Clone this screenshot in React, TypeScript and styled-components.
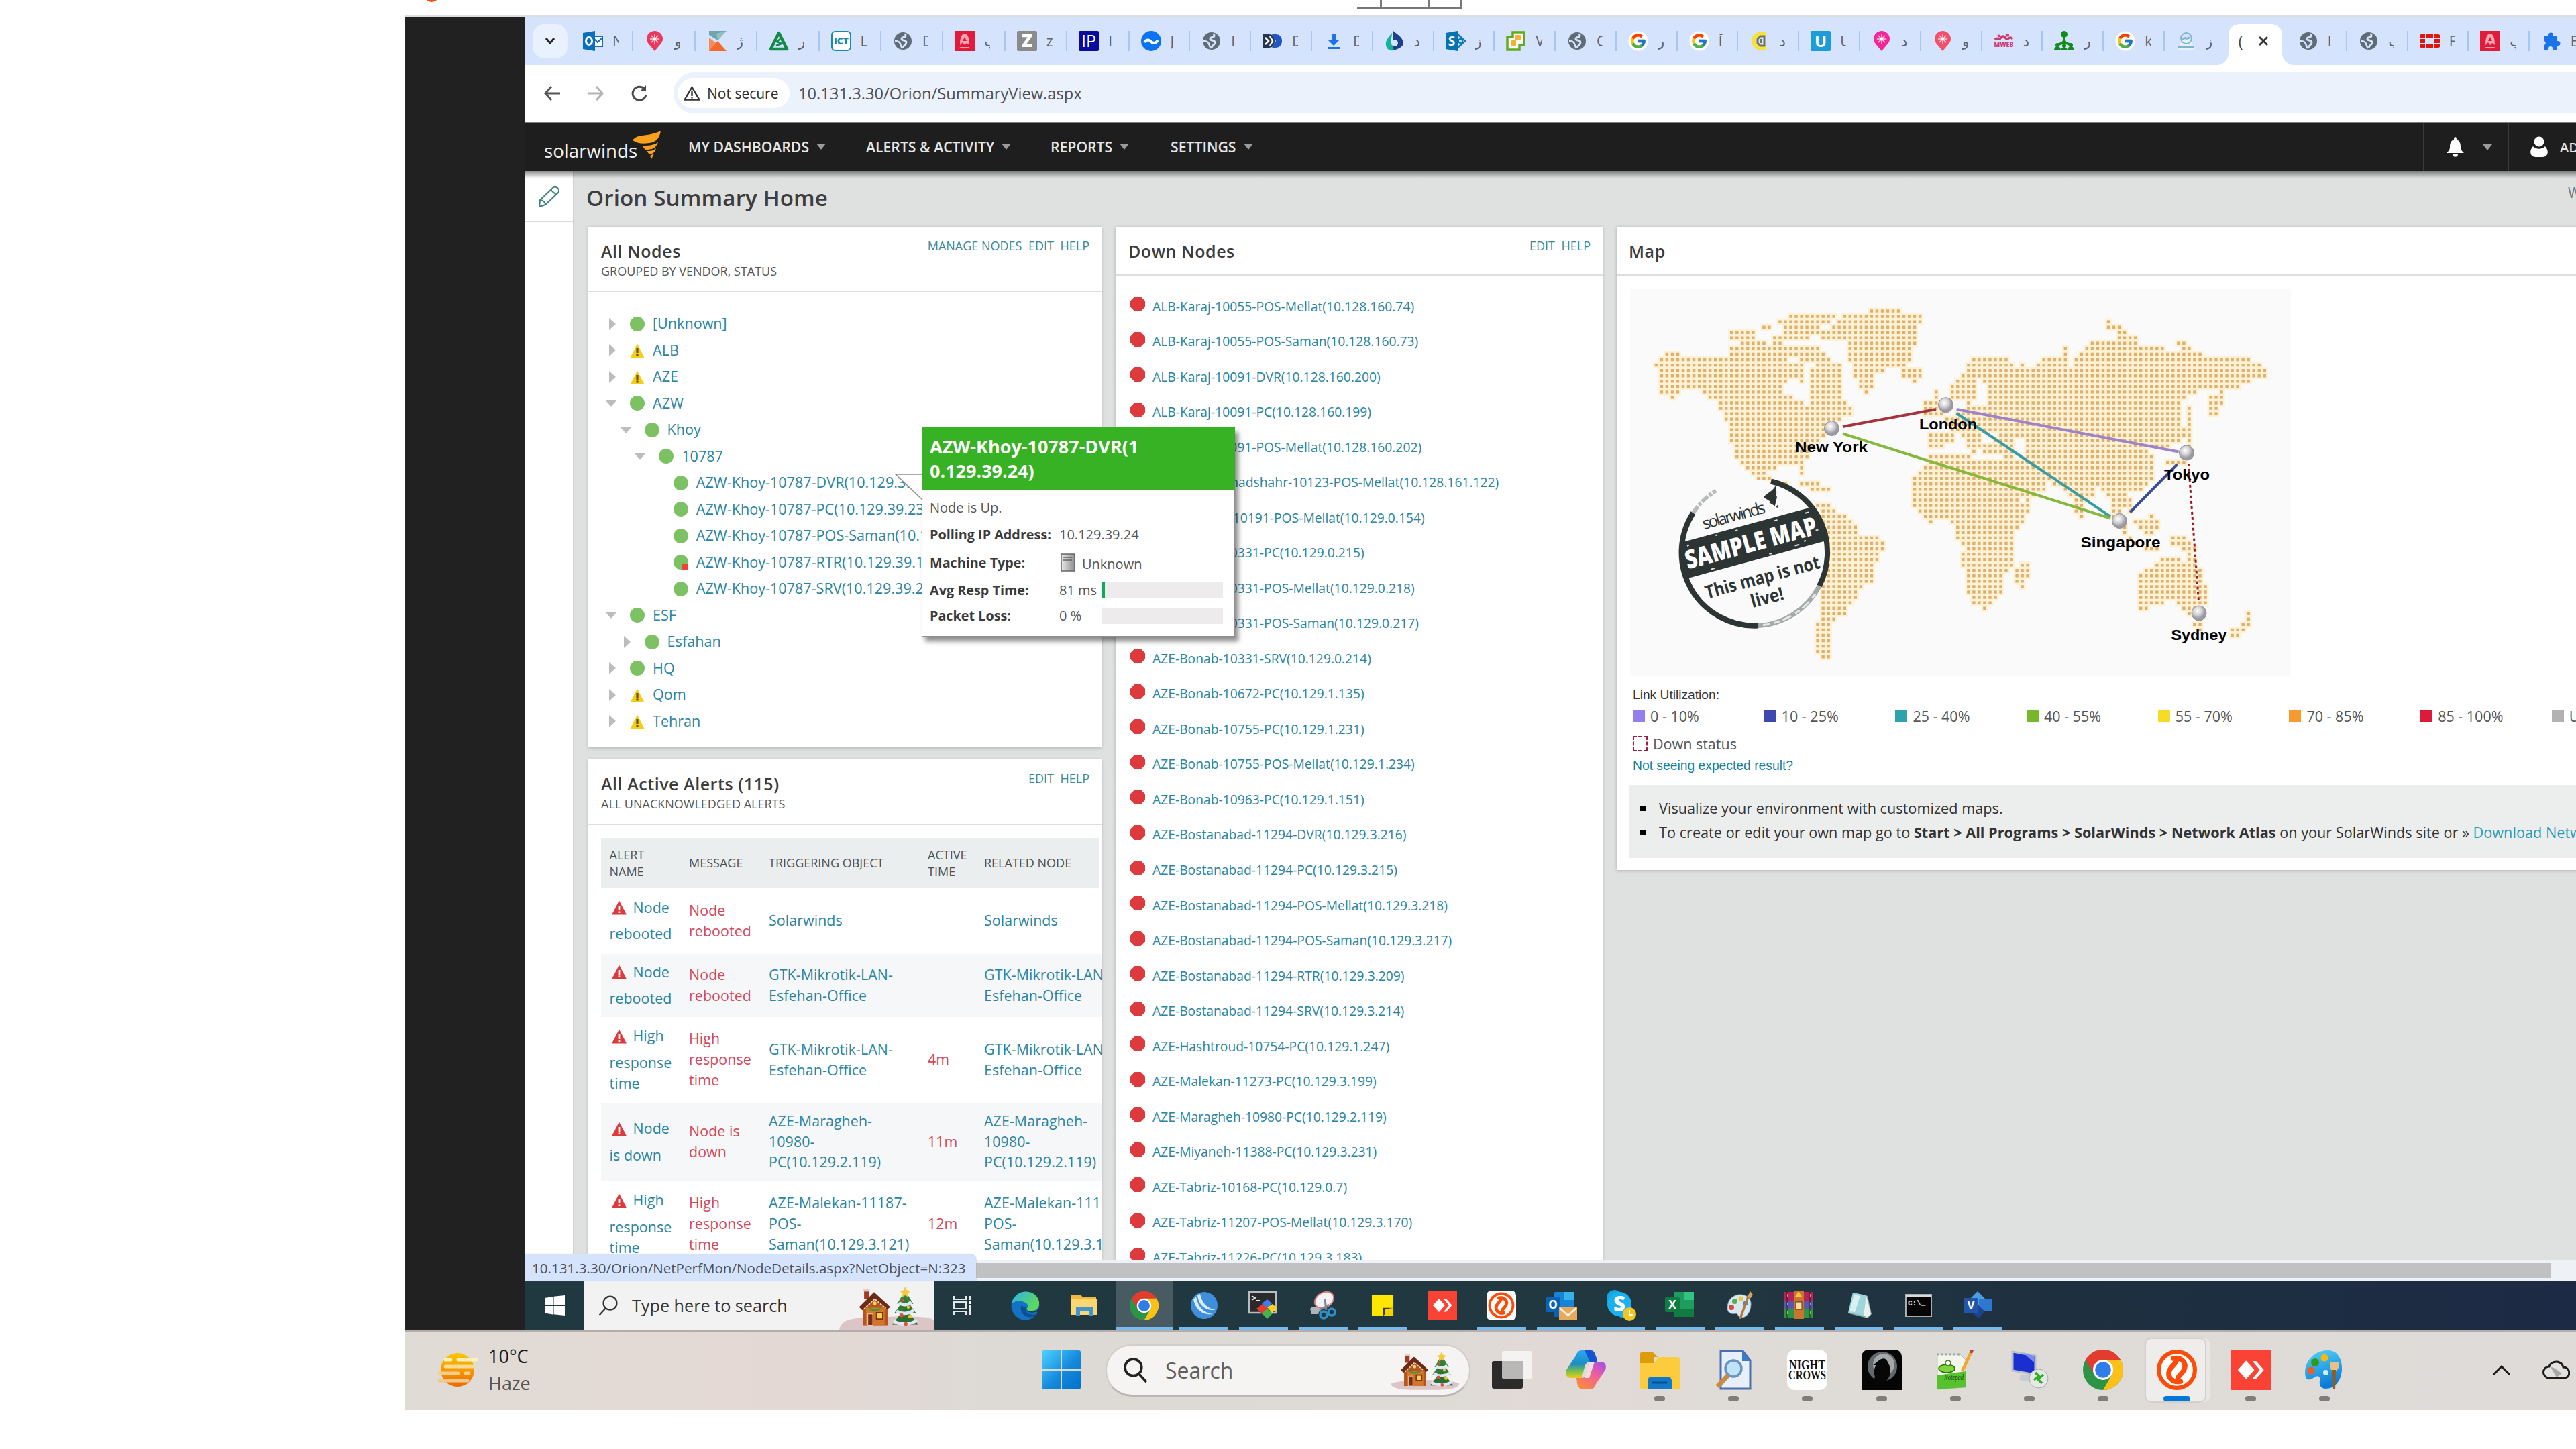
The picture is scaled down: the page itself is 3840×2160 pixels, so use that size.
import React from 'react';
import styled, { createGlobalStyle, css } from 'styled-components';
import { FcGoogle } from 'react-icons/fc';

const Global = createGlobalStyle`
  * { box-sizing: border-box; }
  html, body { margin: 0; padding: 0; background: #fff; }
  body { font-family: "Open Sans", "Noto Sans", "DejaVu Sans", sans-serif; color: #444; }
  svg { display: block; flex: none; }
`;

/* ---------- window frame ---------- */
const Screen = styled.div`
  width: 3840px;
  height: 2160px;
  overflow: hidden;
  background: #fff;
  display: flex;
  flex-direction: column;
`;
const TopStrip = styled.div`
  height: 22px;
  flex: none;
  position: relative;
`;
const OrangeDot = styled.div`
  position: absolute;
  left: 632px;
  top: -20px;
  width: 23px;
  height: 23px;
  border-radius: 50%;
  background: #ff4a12;
`;
const GripBox = styled.div`
  position: absolute;
  left: 2023px;
  top: 0;
  width: 157px;
  height: 14px;
  border-bottom: 3px solid #777;
  border-right: 3px solid #777;
  display: flex;
`;
const GripCell = styled.div<{ $w: number }>`
  width: ${(p) => p.$w}px;
  border-right: 3px solid #777;
`;
const Remote = styled.div`
  margin-left: 603px;
  width: 3237px;
  border-top: 3px solid #dcdde1;
  height: 1963px;
  flex: none;
  display: flex;
  padding-bottom: 3px;
  background: #b3aeab;
  overflow: hidden;
`;
const Gutter = styled.div`
  width: 180px;
  flex: none;
  background: #212121;
`;
const Desktop = styled.div`
  flex: 1;
  min-width: 0;
  display: flex;
  flex-direction: column;
  overflow: hidden;
  position: relative;
`;

/* ---------- browser chrome ---------- */
const TabStrip = styled.div`
  height: 72px;
  flex: none;
  background: #d5e4fc;
  display: flex;
  align-items: center;
  padding-left: 11px;
  white-space: nowrap;
`;
const TabMenu = styled.div`
  width: 52px;
  height: 51px;
  border-radius: 18px;
  background: #e9f1fe;
  margin-right: 4px;
  flex: none;
  display: grid;
  place-items: center;
`;
const Tab = styled.div<{ $w: number; $sep: boolean }>`
  width: ${(p) => p.$w}px;
  height: 30px;
  flex: none;
  border-left: 2px solid ${(p) => (p.$sep ? '#a9c5f4' : 'transparent')};
  padding-left: 17px;
  display: flex;
  align-items: center;
`;
const TabLetter = styled.span`
  margin-left: 14px;
  width: 9px;
  overflow: hidden;
  font-size: 21px;
  line-height: 34px;
  color: #5b636d;
`;
const ActiveTab = styled.div`
  width: 91px;
  height: 72px;
  flex: none;
  position: relative;
  display: flex;
  align-items: center;
  padding-left: 21px;
  gap: 22px;
`;
const ActiveShape = styled.svg`
  position: absolute;
  left: -9px;
  top: 0;
`;
const ActiveLetter = styled.span`
  position: relative;
  width: 8px;
  overflow: hidden;
  font-size: 23px;
  color: #444;
`;
const CloseMark = styled.svg`
  position: relative;
`;
const Toolbar = styled.div`
  height: 85px;
  flex: none;
  background: #fff;
  display: flex;
  align-items: center;
  padding: 0 0 2px 28px;
`;
const ToolIcon = styled.div<{ $gap: number }>`
  margin-right: ${(p) => p.$gap}px;
`;
const Omnibox = styled.div`
  height: 61px;
  flex: 1;
  border-radius: 31px 0 0 31px;
  background: #ecf2fb;
  display: flex;
  align-items: center;
  padding-left: 6px;
`;
const SecurityChip = styled.div`
  width: 167px;
  height: 44px;
  border-radius: 22px;
  background: #fff;
  display: flex;
  align-items: center;
  padding-left: 9px;
  gap: 10px;
  font-size: 21px;
  color: #2b2b2b;
`;
const Url = styled.span`
  margin-left: 13px;
  font-size: 23.7px;
  color: #4b4f55;
`;

/* ---------- Orion top navigation ---------- */
const Nav = styled.div`
  height: 73px;
  flex: none;
  background: #1e1e1e;
  border-top: 1px solid #7b7b7b;
  display: flex;
  align-items: center;
  position: relative;
`;
const Logo = styled.div`
  width: 243px;
  height: 100%;
  padding-left: 28px;
  display: flex;
`;
const LogoText = styled.span`
  font-size: 27.7px;
  line-height: 40px;
  margin-top: 21px;
  color: #f0f0f0;
`;
const LogoFlame = styled.svg`
  margin: 12px 0 0 -7px;
`;
const NavItem = styled.div<{ $w: number }>`
  width: ${(p) => p.$w}px;
  display: flex;
  align-items: center;
  gap: 11px;
  font-size: 21.2px;
  font-weight: 600;
  color: #e6e6e6;
  padding-bottom: 2px;
`;
const Caret = styled.i`
  width: 0;
  height: 0;
  border: 7px solid transparent;
  border-top: 9px solid #9b9b9b;
  border-bottom: 0;
`;
const NavRight = styled.div`
  margin-left: auto;
  width: 228px;
  height: 100%;
  display: flex;
`;
const NavCell = styled.div<{ $w: number; $pad: number; $gap: number }>`
  width: ${(p) => p.$w}px;
  border-left: 1px solid #3a3a3a;
  padding-left: ${(p) => p.$pad}px;
  display: flex;
  align-items: center;
  gap: ${(p) => p.$gap}px;
  flex: none;
  font-size: 20px;
  font-weight: 600;
  color: #e6e6e6;
`;

/* ---------- page ---------- */
const Page = styled.div`
  height: 1624px;
  flex: none;
  display: flex;
  background: #dfe1e1;
  overflow: hidden;
  position: relative;
`;
const NavShadow = styled.div`
  position: absolute;
  left: 0;
  right: 0;
  top: 0;
  height: 11px;
  background: linear-gradient(rgba(0, 0, 0, 0.45), rgba(0, 0, 0, 0));
`;
const SideBar = styled.div`
  width: 73px;
  flex: none;
  background: #fff;
  border-right: 2px solid #cfd1d1;
`;
const EditSlot = styled.div`
  height: 76px;
  border-bottom: 2px solid #dadada;
  padding: 21px 0 0 18px;
`;
const Content = styled.div`
  flex: 1;
  min-width: 0;
  padding-left: 21px;
`;
const TitleRow = styled.div`
  height: 83px;
  display: flex;
  justify-content: space-between;
  padding: 14px 0 0;
  margin-left: -3px;
`;
const PageTitle = styled.h1`
  margin: 0;
  font-size: 33.2px;
  letter-spacing: 0.1px;
  font-weight: 600;
  line-height: 52px;
  color: #3d3d3d;
`;
const Clock = styled.span`
  width: 12px;
  overflow: hidden;
  font-size: 21px;
  line-height: 36px;
  color: #6c7a80;
`;
const Columns = styled.div`
  display: flex;
  align-items: flex-start;
  gap: 21px;
`;
const Column = styled.div<{ $w: number }>`
  width: ${(p) => p.$w}px;
  flex: none;
  display: flex;
  flex-direction: column;
  gap: 18px;
`;
const Panel = styled.section<{ $h: number }>`
  height: ${(p) => p.$h}px;
  background: #fff;
  box-shadow: 0 1px 5px rgba(0, 0, 0, 0.22);
  overflow: hidden;
`;
const PanelHead = styled.header<{ $h: number; $pad: number }>`
  height: ${(p) => p.$h}px;
  border-bottom: 2px solid #dcdede;
  padding: 19px 18px 0 ${(p) => p.$pad}px;
  display: flex;
  justify-content: space-between;
`;
const PanelTitle = styled.h2`
  margin: 0;
  font-size: 25px;
  letter-spacing: 0.55px;
  font-weight: 600;
  line-height: 34px;
  color: #3c3c3c;
`;
const PanelSub = styled.div`
  font-size: 18px;
  line-height: 26px;
  color: #555;
`;
const PanelLinks = styled.div`
  display: flex;
  gap: 9.5px;
  margin-top: -4px;
  font-size: 18px;
  line-height: 26px;
  color: #3a8795;
  height: 26px;
`;

/* ---------- node tree ---------- */
const Tree = styled.div`
  padding: 27px 0 0 24px;
`;
const TreeRow = styled.div<{ $depth: number }>`
  height: 39.53px;
  padding-left: ${(p) => p.$depth * 21.6}px;
  display: flex;
  align-items: center;
  font-size: 21.6px;
  color: #2a84a0;
  white-space: nowrap;
`;
const TreeText = styled.span`
  margin-top: -2px;
`;
const Twist = styled.div`
  width: 38px;
  display: flex;
  padding-left: 1px;
`;
const RightTwist = styled.i`
  margin-left: 6px;
  border: 9px solid transparent;
  border-left: 10px solid #bdbdbd;
  border-right: 0;
`;
const DownTwist = styled.i`
  border: 9px solid transparent;
  border-top: 10px solid #bdbdbd;
  border-bottom: 0;
`;
const StatusSlot = styled.div`
  width: 34px;
`;

/* ---------- alerts ---------- */
const AlertTable = styled.div`
  margin: 19px 0 0 19px;
  width: 746px;
`;
const rowGrid = css`
  display: grid;
  grid-template-columns: 118.5px 119px 237px 84px 1fr;
  padding-left: 12.5px;
  align-items: center;
`;
const AlertHead = styled.div`
  ${rowGrid}
  height: 75px;
  margin-right: 3px;
  background: #ebeeee;
  font-size: 18px;
  line-height: 25px;
  color: #4c4f50;
`;
const AlertRow = styled.div<{ $h: number; $odd: boolean }>`
  ${rowGrid}
  height: ${(p) => p.$h}px;
  background: ${(p) => (p.$odd ? '#f6f7f8' : '#fff')};
  font-size: 21.4px;
  letter-spacing: 0.08px;
  line-height: 30.8px;
  color: #2a84a0;
  white-space: pre;
`;
const NameCell = styled.div`
  padding-bottom: 9px;
`;
const NameFirst = styled.div`
  height: 48px;
  display: flex;
  align-items: center;
  gap: 10px;
  padding-left: 3px;
`;
const Cell = styled.div<{ $red?: boolean }>`
  padding-bottom: 1px;
  color: ${(p) => (p.$red ? '#d4485a' : 'inherit')};
`;

/* ---------- down nodes ---------- */
const DownList = styled.div`
  padding: 19px 0 0 22px;
`;
const DownRow = styled.div`
  height: 52.52px;
  display: flex;
  align-items: center;
  gap: 11px;
  font-size: 19.3px;
  color: #2a84a0;
  white-space: nowrap;
`;
const DownMark = styled.div`
  margin-top: -6px;
`;

/* ---------- map ---------- */
const MapBody = styled.div`
  padding: 20px 0 0 20px;
`;
const LegendTitle = styled.div`
  margin: 15px 0 0 4px;
  font: 19.2px/26px "Liberation Sans", Arial, sans-serif;
  color: #333;
`;
const LegendRow = styled.div`
  display: flex;
  margin: 0 0 5px 4px;
  height: 36px;
  align-items: center;
`;
const LegendItem = styled.div`
  width: 195.7px;
  flex: none;
  display: flex;
  align-items: center;
  gap: 8px;
  font-size: 21.5px;
  color: #555;
  white-space: nowrap;
`;
const Swatch = styled.i<{ $c: string }>`
  width: 18px;
  height: 19px;
  background: ${(p) => p.$c};
`;
const DownSwatch = styled.i`
  width: 22px;
  height: 23px;
  border: 2px dashed #a01c40;
`;
const HelpLink = styled.div`
  margin: -2px 0 0 4px;
  font: 19.3px/26px "Liberation Sans", Arial, sans-serif;
  color: #147f9f;
`;
const Hints = styled.ul`
  list-style: none;
  margin: 15px 0 0 -2px;
  padding: 17px 0 0 17px;
  height: 109px;
  background: #eceeee;
  font-size: 21.7px;
  line-height: 36px;
  color: #333;
`;
const Hint = styled.li`
  display: flex;
  align-items: center;
  gap: 19px;
  white-space: nowrap;
  &::before {
    content: '';
    flex: none;
    width: 9px;
    height: 8px;
    background: #000;
  }
`;
const HintLink = styled.span`
  color: #2a9cb8;
`;

/* ---------- node tooltip ---------- */
const Tooltip = styled.div`
  position: absolute;
  left: 591px;
  top: 612px;
  width: 467px;
  height: 312px;
  background: #fff;
  border: 1px solid #8f8f8f;
  box-shadow: 5px 7px 7px rgba(0, 0, 0, 0.45);
`;
const TooltipArrow = styled.svg`
  position: absolute;
  left: -41px;
  top: 68px;
`;
const TooltipHead = styled.div`
  height: 94px;
  background: #38b225;
  color: #fff;
  font-weight: 700;
  font-size: 27px;
  line-height: 36px;
  padding: 11px 0 0 11px;
  margin: -1px -1px 0 0;
`;
const TooltipBody = styled.div`
  padding: 5px 0 0 11px;
  font-size: 20px;
  color: #555;
`;
const TipRow = styled.div<{ $h: number }>`
  height: ${(p) => p.$h}px;
  display: flex;
  align-items: center;
`;
const TipLabel = styled.b`
  width: 193px;
  color: #3a3a3a;
  font-weight: 700;
  font-size: 19.8px;
`;
const TipValue = styled.span<{ $w?: number }>`
  display: flex;
  gap: 10px;
  width: ${(p) => (p.$w ? p.$w + 'px' : 'auto')};
  align-items: center;
  padding-left: ${(p) => (p.$w ? 0 : 2)}px;
`;
const MachineName = styled.span`
  padding-top: 4px;
`;
const Meter = styled.div`
  width: 181px;
  height: 24px;
  background: #edebec;
`;
const MeterFill = styled.div`
  height: 100%;
  background: #0cac57;
`;

/* ---------- scrollbar + status popup ---------- */
const HScroll = styled.div`
  height: 30px;
  flex: none;
  background: #eef1f5;
  padding: 3px 37px 4px 0;
`;
const HThumb = styled.div`
  height: 100%;
  background: #c1c1c3;
`;
const StatusPopup = styled.div`
  position: absolute;
  left: 0;
  top: 1845px;
  width: 672px;
  height: 39px;
  border-top-right-radius: 8px;
  background: #d5e4fc;
  box-shadow: 0 0 2px #9aa8bf;
  padding-left: 10px;
  font-size: 20.6px;
  line-height: 41px;
  color: #4a4f58;
  white-space: nowrap;
`;

/* ---------- inner taskbar ---------- */
const InnerBar = styled.div`
  height: 73px;
  flex: none;
  display: flex;
  background: linear-gradient(90deg, #20383f 0%, #213840 55%, #1e3040 75%, #1d2a45 100%);
  border-top: 1px solid #7d8890;
`;
const StartCell = styled.div`
  width: 88px;
  display: grid;
  place-items: center;
`;
const InnerSearch = styled.div`
  width: 521px;
  background: #f3f2f2;
  display: flex;
  align-items: center;
  padding-left: 21px;
  font-size: 25.2px;
  color: #333;
  gap: 20px;
`;
const InnerArt = styled.div`
  margin-left: auto;
  align-self: flex-end;
`;
const TaskView = styled.div`
  width: 92px;
  padding-right: 6px;
  display: grid;
  place-items: center;
`;
const InnerItem = styled.div<{ $open?: boolean; $active?: boolean }>`
  width: 88.75px;
  position: relative;
  display: grid;
  place-items: center;
  &::before {
    content: '';
    position: absolute;
    inset: 0 2px;
    background: ${(p) => (p.$active ? 'rgba(255,255,255,0.18)' : 'none')};
  }
  &::after {
    content: '';
    position: absolute;
    bottom: 0;
    left: ${(p) => (p.$active ? 2 : 8)}px;
    right: ${(p) => (p.$active ? 2 : 8)}px;
    height: 4px;
    background: ${(p) => (p.$open ? '#76b9ed' : 'none')};
  }
  svg { position: relative; }
`;

/* ---------- outer taskbar ---------- */
const OuterBar = styled.div`
  margin-left: 603px;
  height: 117px;
  flex: none;
  display: flex;
  align-items: center;
  padding: 0 0 3px 49px;
  background: linear-gradient(90deg, #e0dbd5 0%, #e3dad5 9%, #e4d8d4 18%, #dddad6 27%, #dedbd7 48%, #e2d9d5 53%, #dfdbd7 60%, #dedbd8 100%);
`;
const Weather = styled.div`
  width: 901px;
  display: flex;
  align-items: center;
  gap: 16px;
  font-size: 27px;
  line-height: 40px;
  color: #1b1b1b;
`;
const Muted = styled.div`
  color: #575655;
`;
const SearchPill = styled.div`
  width: 544px;
  height: 78px;
  margin: 2px 7px 0 37px;
  border-radius: 39px;
  background: #f5f4f2;
  border: 2px solid #d1cdca;
  border-bottom: 3px solid #b9b5b2;
  display: flex;
  align-items: center;
  padding: 0 13px 0 24px;
  font-size: 32px;
  color: #62605e;
  gap: 26px;
  flex: none;
`;
const PillArt = styled.div`
  margin-left: auto;
`;
const OuterItem = styled.div<{ $mark?: 'dot' | 'active' }>`
  width: 110.1px;
  height: 97px;
  flex: none;
  position: relative;
  display: grid;
  place-items: center;
  border-radius: 10px;
  ${(p) =>
    p.$mark === 'active' &&
    css`
      &::before {
        content: '';
        position: absolute;
        inset: 0 11px 0 7px;
        border-radius: 10px;
        background: #efedec;
        border: 2px solid #d3cfcc;
        box-shadow: 7px 0 0 -1px #e9e6e4;
      }
    `}
  &::after {
    content: '';
    position: absolute;
    bottom: ${(p) => (p.$mark ? 2 : 0)}px;
    width: ${(p) => (p.$mark === 'active' ? 40 : 16)}px;
    height: 8px;
    border-radius: 4px;
    background: ${(p) => (p.$mark === 'active' ? '#0078d7' : p.$mark ? '#7f7c7a' : 'none')};
  }
  svg { position: relative; }
`;
const Tray = styled.div`
  margin-left: 195px;
  display: flex;
  align-items: center;
  gap: 47px;
`;

/* ---------- drawings ---------- */
type Sz = { s?: number };
const PinIcon = ({ c = '#f0257a' }: { c?: string }) => (
  <svg width="30" height="30" viewBox="0 0 30 30">
    <path d="M15 30C9 22 3 18 3 12a12 12 0 0 1 24 0c0 6-6 10-12 18z" fill={c} />
    <g stroke="#ffc9d6" strokeWidth="1.600"><path d="M15 4v16M7 12h16M9.500 6.500l11 11M20.500 6.500l-11 11" /></g>
    <circle cx="15" cy="12" r="8" fill="none" stroke={c} strokeWidth="1.500" />
    <circle cx="15" cy="12" r="2.200" fill="#fff" />
  </svg>
);
const OutlookFav = () => (
  <svg width="30" height="30" viewBox="0 0 30 30">
    <rect x="14" y="8" width="15" height="15" fill="#fff" stroke="#0a6ebd" strokeWidth="2" />
    <path d="M16 11l6 6 6-6" fill="none" stroke="#0a6ebd" strokeWidth="2" />
    <path d="M0 3l18-3v30L0 27z" fill="#0a6ebd" />
    <ellipse cx="9" cy="15" rx="4.500" ry="5.500" fill="none" stroke="#fff" strokeWidth="3" />
  </svg>
);
const KFav = () => (
  <svg width="30" height="30" viewBox="0 0 30 30">
    <path d="M3 0h26L16 14 3 6z" fill="#6fa5ad" />
    <path d="M29 0L14 4 16 14z" fill="#94bfc3" />
    <path d="M3 10l13 10L3 30z" fill="#f58a5c" />
    <path d="M16 15l13 15H3z" fill="#f26a2e" />
  </svg>
);
const TriFav = () => (
  <svg width="30" height="30" viewBox="0 0 30 30">
    <path d="M15 3l12 24H3z" fill="none" stroke="#148a4a" strokeWidth="4.500" strokeLinejoin="round" />
    <path d="M17 12l-5 4 7 3-8 3" fill="none" stroke="#148a4a" strokeWidth="2.800" />
  </svg>
);
const TextFav = ({ bg, fg, t, fs, bd, w = 700, tl }: { bg: string; fg: string; t: string; fs: number; bd?: string; w?: number; tl?: number }) => (
  <svg width="30" height="30" viewBox="0 0 30 30">
    <rect x="1" y="1" width="28" height="28" rx={bd ? 5 : 1} fill={bg} stroke={bd || bg} strokeWidth="2" />
    <text x="15" y={15 + fs * 0.36} fontSize={fs} fontWeight={w} textAnchor="middle" fill={fg} textLength={tl} lengthAdjust="spacingAndGlyphs">{t}</text>
  </svg>
);
const GlobeFav = () => (
  <svg width="30" height="30" viewBox="0 0 30 30">
    <circle cx="15" cy="15" r="13" fill="#5f6b76" />
    <path d="M19 4c-1 3 1 4-1 5s-5 0-5 3 7 1 7 5-4 4-5 8" fill="none" stroke="#d5e4fc" strokeWidth="3" />
    <path d="M3 15c4 0 7 1 8 4s1 4 3 7" fill="none" stroke="#d5e4fc" strokeWidth="2.500" />
  </svg>
);
const RedAFav = () => (
  <svg width="30" height="30" viewBox="0 0 30 30">
    <rect width="30" height="30" fill="#e21a3c" />
    <path d="M8 21c0-12 3-17 7-17s7 5 7 17l-4-3-3 3-3-4zM7 24c5 3 11 3 16 0" fill="#f6a5b0" />
    <path d="M12 15l3-6 3 6z" fill="#e21a3c" />
  </svg>
);
const BlueTilde = () => (
  <svg width="30" height="30" viewBox="0 0 30 30">
    <circle cx="15" cy="15" r="15" fill="#0a73f5" />
    <path d="M5 17c4-6 8-3 10-1s6 4 10-2" fill="none" stroke="#fff" strokeWidth="4" />
  </svg>
);
const DDFav = () => (
  <svg width="30" height="30" viewBox="0 0 30 30">
    <path d="M1 5h8c8 0 9 5 9 10s-2 10-9 10H1z" fill="#26344f" />
    <path d="M14 5h5c8 0 10 5 10 10s-3 10-10 10h-5l6-10z" fill="#1e56c6" />
    <path d="M4 10l5 5-5 5M11 8l4 7-4 7" stroke="#fff" strokeWidth="2.500" fill="none" />
  </svg>
);
const DownloadFav = () => (
  <svg width="30" height="30" viewBox="0 0 30 30">
    <path d="M12 4h6v9h6l-9 9-9-9h6zM6 24h18v3H6z" fill="#1a73e8" />
  </svg>
);
const DropFav = () => (
  <svg width="30" height="30" viewBox="0 0 30 30">
    <path d="M13 0c4 4 16 10 15 20-5 8-15 9-21 9l5-9z" fill="#1d3f8f" />
    <path d="M11 3C6 9 1 14 2 21s6 9 12 8l-3-8c-3-5 0-12 0-18z" fill="#16b39a" />
    <circle cx="15" cy="18" r="5" fill="#d5e4fc" />
  </svg>
);
const ShareFav = () => (
  <svg width="30" height="30" viewBox="0 0 30 30">
    <path d="M18 5l11 10-11 10" fill="none" stroke="#0b78b8" strokeWidth="2.500" />
    <circle cx="22" cy="15" r="3" fill="none" stroke="#0b78b8" strokeWidth="2" />
    <path d="M0 3l18-3v30L0 27z" fill="#0673b5" />
    <text x="9" y="22" fontSize="19" fontWeight="700" textAnchor="middle" fill="#fff">S</text>
  </svg>
);
const VmFav = () => (
  <svg width="30" height="30" viewBox="0 0 30 30">
    <path d="M10 2h17v19h-7v7H2V9h8z" fill="#fff" stroke="#62aa22" strokeWidth="3.500" />
    <path d="M14 6h8v8h-8z" fill="#f5b335" />
    <path d="M7 14h8v9H7z" fill="#f5b335" />
  </svg>
);
const GoogleFav = () => (
  <svg width="30" height="30" viewBox="0 0 30 30">
    <circle cx="15" cy="15" r="14.500" fill="#fff" />
    <g transform="translate(2 2)"><FcGoogle size={26} /></g>
  </svg>
);
const YellowFav = () => (
  <svg width="30" height="30" viewBox="0 0 30 30">
    <path d="M24 1H13L4 9v12l9 8h11v-6h-9l-5-4v-8l5-4h9z" fill="#f5e23a" />
    <path d="M22 8h-6l-4 4v6l4 4h6zM17 12v6" fill="none" stroke="#77745c" strokeWidth="3" />
  </svg>
);
const RedTextFav = () => (
  <svg width="30" height="30" viewBox="0 0 30 30">
    <path d="M2 13c3-5 6 2 8-2s5-4 8 0 6-5 10 1M6 8l3-1M18 7l5-1" fill="none" stroke="#cf3a6e" strokeWidth="3.500" />
    <text x="15" y="24" fontSize="11" fontWeight="800" textAnchor="middle" textLength="29" lengthAdjust="spacingAndGlyphs" fill="#cf3a6e">MWEB</text>
  </svg>
);
const TreeFav = () => (
  <svg width="30" height="30" viewBox="0 0 30 30">
    <circle cx="15" cy="5" r="5" fill="#138a1c" />
    <path d="M15 8v18M15 14c-2 6-6 4-9 7M15 14c2 6 6 4 9 7" stroke="#138a1c" strokeWidth="3.500" fill="none" />
    <path d="M0 29c0-8 10-8 10 0zM10 29c0-6 10-6 10 0zM20 29c0-8 10-8 10 0z" fill="#138a1c" />
    <circle cx="5" cy="21" r="3" fill="#138a1c" /><circle cx="25" cy="21" r="3" fill="#138a1c" /><circle cx="15" cy="22" r="3" fill="#138a1c" />
  </svg>
);
const GrayFav = () => (
  <svg width="30" height="30" viewBox="0 0 30 30">
    <path d="M6 20l4-8h10l4 8 5 9H1z" fill="#e6f2f8" />
    <circle cx="15" cy="11" r="8" fill="none" stroke="#7fb4d0" strokeWidth="2" />
    <path d="M10 13c3-6 6 2 10-4M3 24h24" stroke="#7fb4d0" strokeWidth="3" fill="none" />
  </svg>
);
const FortiFav = () => (
  <svg width="30" height="30" viewBox="0 0 30 30">
    <path d="M0 6l4-2h4v6H0zM10 4h10v6H10zM22 4h4l4 2v4h-8zM0 12h8v6H0zM22 12h8v6h-8zM0 20h8v6H4l-4-2zM10 20h10v6H10zM22 20h8v4l-4 2h-4z" fill="#e2140f" />
  </svg>
);
const PuzzleFav = () => (
  <svg width="30" height="30" viewBox="0 0 30 30">
    <path d="M4 8h7V6a3.500 3.500 0 0 1 7 0v2h6v7h1a3.500 3.500 0 0 1 0 7h-1v6h-7v-2a3 3 0 0 0-6 0v2H4v-7h1a3.500 3.500 0 0 0 0-6H4z" fill="#1a73e8" />
  </svg>
);

const AnyDeskIcon = ({ s = 44 }: Sz) => (
  <svg width={s} height={s} viewBox="0 0 44 44">
    <rect width="44" height="44" fill="#fb4335" />
    <path d="M17 12l9 10-9 10-9-10z" fill="#fff" />
    <path d="M24 12.500h4L36.500 22 28 31.500h-4L32 22z" fill="#fff" />
    <path d="M20.500 12.500L29 22l-8.500 9.500" fill="none" stroke="#fb4335" strokeWidth="1.800" />
  </svg>
);
const SwirlIcon = ({ s = 44, frame }: Sz & { frame?: boolean }) => (
  <svg width={s} height={s} viewBox="0 0 44 44">
    {frame && <rect width="44" height="44" rx="7" fill="#fff" />}
    <g transform={frame ? 'translate(2.500 2.500) scale(.886)' : undefined}>
      <circle cx="22" cy="22" r="22" fill="#fb4c0a" />
      <circle cx="22" cy="22" r="17.500" fill="#fff" />
      <path d="M18 9.500c9-2 15 5 12 12-2 5-8 7-8 13" fill="none" stroke="#fb4c0a" strokeWidth="5.500" strokeLinecap="round" />
      <path d="M26 34.500c-9 2-15-5-12-12 2-5 8-7 8-13" fill="none" stroke="#fb4c0a" strokeWidth="5.500" strokeLinecap="round" />
      <path d="M24 15c2 4-1 6-3 9s-2 4-1 6" fill="none" stroke="#fff" strokeWidth="2.500" strokeLinecap="round" />
    </g>
  </svg>
);
const ChromeIcon = ({ s = 44 }: Sz) => (
  <svg width={s} height={s} viewBox="0 0 48 48">
    <circle cx="24" cy="24" r="24" fill="#2b9447" />
    <path d="M3.200 12A24 24 0 0 1 44.800 12H24L13.600 30z" fill="#e33b2e" />
    <path d="M44.800 12A24 24 0 0 1 24 48L34.400 30 24 12z" fill="#fbc116" />
    <circle cx="24" cy="24" r="12" fill="#fff" />
    <circle cx="24" cy="24" r="9.400" fill="#2f7de9" />
  </svg>
);
const FolderIcon = ({ s = 42 }: Sz) => (
  <svg width={s} height={s} viewBox="0 0 60 60">
    <path d="M0 8a4 4 0 0 1 4-4h16l7 7h-5v12H0z" fill="#dd9c0a" />
    <path d="M0 20h22l6-9h28a4 4 0 0 1 4 4v43H4a4 4 0 0 1-4-4z" fill="#fccc3c" />
    <path d="M12 58V46a6 6 0 0 1 6-6h24a6 6 0 0 1 6 6v12z" fill="#1179c8" />
    <path d="M19 49h22" stroke="#0a4f8c" strokeWidth="3" />
  </svg>
);
const LegacyFolder = () => (
  <svg width="42" height="42" viewBox="0 0 42 42">
    <path d="M1 5h14l3 4h20v26H1z" fill="#f1b93a" />
    <path d="M1 12h38v23H1z" fill="#fbd772" />
    <path d="M8 37V23h26v14h-6v-7H14v7z" fill="#4393d2" />
  </svg>
);
const EdgeIcon = () => (
  <svg width="43" height="43" viewBox="0 0 44 44">
    <defs>
      <linearGradient id="edgeA" x1="0" y1="0" x2="1" y2="0.600"><stop offset="0" stopColor="#2ab4e8" /><stop offset="1" stopColor="#62d957" /></linearGradient>
    </defs>
    <circle cx="22" cy="22" r="21.500" fill="#1272c4" />
    <path d="M1 19C4 6 14 .5 23 .5 36 .5 44 11 43 19c0 7-6 11-12 11-4 0-7-1-7-3 0-1 3-3 1-7-3-5-17-8-24-1z" fill="url(#edgeA)" />
    <path d="M16 22c-4 8 4 20 18 17 2 0 5-3 6-5-6 3-20 1-17-9z" fill="#0d4f97" />
    <path d="M24 26c-1 6 9 8 15 5l2 2c2-4 3-8 3-11-2 8-7 9-12 9s-8-2-8-5z" fill="#20373f" />
  </svg>
);
const BallIcon = () => (
  <svg width="42" height="42" viewBox="0 0 42 42">
    <circle cx="21" cy="21" r="20" fill="#3f8fdc" />
    <path d="M5 12c3 14 12 24 29 22C20 32 12 24 9 8zM11 6c2 14 10 23 27 22C25 25 18 18 15 4z" fill="#d9ecfa" />
  </svg>
);
const TermIcon = () => (
  <svg width="44" height="42" viewBox="0 0 44 42">
    <rect x="1" y="1" width="40" height="31" fill="#2a2a2a" stroke="#b9bdc0" strokeWidth="2.500" />
    <path d="M5 7l5 3-5 3M12 14h6" stroke="#eee" strokeWidth="2" fill="none" />
    <path d="M20 18l8-6 7 6-7 8z" fill="#3d7bf2" />
    <path d="M12 26l9-7 8 7-8 8z" fill="#ea3a30" />
    <path d="M28 24l8-5 7 7-8 6z" fill="#ffd21f" />
    <path d="M20 33l8-7 8 7-8 8z" fill="#45b649" />
  </svg>
);
const SnipIcon = () => (
  <svg width="42" height="42" viewBox="0 0 42 42">
    <ellipse cx="23" cy="13" rx="15" ry="11" fill="#f4f2f2" stroke="#d77a80" strokeWidth="2" transform="rotate(-30 23 13)" />
    <path d="M2 26c4-5 10-3 15 0l-3 8H4z" fill="#aeb4b8" />
    <path d="M24 12l2 16M16 28l14-8" stroke="#7c8a92" strokeWidth="3" />
    <circle cx="22" cy="35" r="5" fill="none" stroke="#2f8fc7" strokeWidth="3.500" />
    <circle cx="34" cy="31" r="5" fill="none" stroke="#2f8fc7" strokeWidth="3.500" />
  </svg>
);
const StickyIcon = () => (
  <svg width="34" height="34" viewBox="0 0 36 36">
    <path d="M1 1h34v34H1z" fill="#ffe600" />
    <path d="M18 35V22h17z" fill="#3a3a20" />
    <path d="M22 35V24l13-2v13z" fill="#f4d400" />
  </svg>
);
const OfficeIcon = ({ t, dark, mid, light, mail }: { t: string; dark: string; mid: string; light: string; mail?: boolean }) => (
  <svg width="48" height="46" viewBox="0 0 48 46">
    <rect x="14" y="3" width="30" height="37" rx="2" fill={mid} />
    <rect x="29" y="3" width="15" height="12" fill={light} />
    <rect x="14" y="28" width="30" height="12" fill={dark} />
    <rect x="1" y="11" width="22" height="22" rx="2" fill={dark} />
    <text x="12" y="28" fontSize="17" fontWeight="700" textAnchor="middle" fill="#fff">{t}</text>
    {mail && <g><rect x="21" y="26" width="27" height="19" fill="#e9a95c" /><path d="M22 27l12.500 11L47 27" fill="none" stroke="#fff1dc" strokeWidth="2.500" /></g>}
  </svg>
);
const SkypeIcon = () => (
  <svg width="46" height="46" viewBox="0 0 46 46">
    <circle cx="14" cy="12" r="12" fill="#14a4e2" /><circle cx="28" cy="30" r="12" fill="#14a4e2" /><circle cx="21" cy="21" r="18" fill="#1bb0ee" />
    <text x="21" y="32" fontSize="31" fontWeight="800" textAnchor="middle" fill="#fff">S</text>
    <circle cx="36" cy="36" r="10" fill="#f3c622" /><path d="M36 30v7h5" stroke="#fff" strokeWidth="2" fill="none" />
  </svg>
);
const LegacyPaint = () => (
  <svg width="42" height="42" viewBox="0 0 42 42">
    <path d="M3 25C3 12 12 5 22 5s16 6 16 14-4 20-14 20c-6 0-4-6-8-6-6 1-13 0-13-8z" fill="#d9e7f2" stroke="#8fb0c8" />
    <circle cx="14" cy="15" r="4" fill="#58b04a" /><circle cx="23" cy="11" r="3.500" fill="#f2c53a" /><circle cx="9" cy="24" r="4" fill="#d9483b" /><circle cx="30" cy="18" r="3.500" fill="#4a80d0" />
    <path d="M22 41l13-36" stroke="#b5793a" strokeWidth="3.500" /><path d="M33 8l4-8 4 5-4 6z" fill="#d9a25e" />
  </svg>
);
const RarIcon = () => (
  <svg width="44" height="42" viewBox="0 0 44 42">
    <rect y="1" width="43" height="13" fill="#b3235c" /><rect y="14" width="43" height="13" fill="#5b57a8" /><rect y="27" width="43" height="13" fill="#2f9444" />
    <path d="M4 1v39M38 1v39" stroke="#00000055" strokeWidth="3" />
    <path d="M5 4v33M39 4v33" stroke="#e9c53f" strokeWidth="1.500" strokeDasharray="4 9" />
    <rect x="14" width="15" height="41" fill="#c8752e" /><rect x="17" y="16" width="9" height="11" fill="#f5dfa0" stroke="#5a3510" /><path d="M21 0l5 8H16z" fill="#f6c33c" />
  </svg>
);
const NotepadIcon = () => (
  <svg width="42" height="42" viewBox="0 0 42 42">
    <path d="M12 2l22 5 6 27-6 6-28-7z" fill="#86a6aa" />
    <path d="M12 2l20 4-4 30L5 32z" fill="#9fd6dc" /><path d="M14 5l9 2-8 24-8-1z" fill="#d8f1f3" /><path d="M32 6l7 28-6 5-5-3z" fill="#eef0f0" />
  </svg>
);
const CmdIcon = () => (
  <svg width="40" height="34" viewBox="0 0 40 34">
    <rect x="1" y="1" width="38" height="32" fill="#050505" stroke="#a9adb0" strokeWidth="2" /><rect x="1" y="1" width="38" height="4" fill="#dadada" />
    <text x="4" y="17" fontSize="11" fontWeight="700" fill="#eee" fontFamily="Liberation Mono, monospace">C:\_</text>
  </svg>
);
const VisioIcon = () => (
  <svg width="44" height="44" viewBox="0 0 44 44">
    <path d="M22 1l11 11-11 12-11-12z" fill="#4c9fe6" /><rect x="24" y="12" width="19" height="19" fill="#2f78d0" /><path d="M23 22l10 9-10 10-11-10z" fill="#1b448f" />
    <rect x="1" y="11" width="22" height="22" rx="2" fill="#2355a8" /><text x="12" y="28" fontSize="17" fontWeight="700" textAnchor="middle" fill="#fff">V</text>
  </svg>
);
const FestiveArt = ({ wide }: { wide?: boolean }) => (
  <svg width={wide ? 141 : 107} height={wide ? 65 : 58} viewBox={wide ? '-10 -1 152 70' : '0 -1 130 70'}>
    <path d={wide ? 'M-10 69c4-18 24-19 60-20s92-3 92 6v14z' : 'M4 58c10-8 112-10 124 0-4 11-24 11-62 11s-58 0-62-11z'} fill="#dcc5c6" />
    <path d="M28 28l20-16 20 17v33H28z" fill="#b5541c" />
    <path d="M33 34h30v28H33z" fill="#d2762a" />
    <path d="M30 6h8v14h-8z" fill="#a33a22" /><path d="M29 4h10v4H29z" fill="#e8c9bd" />
    <path d="M22 33L46 9l26 24-5 4-20-18-20 19z" fill="#6d2a17" />
    <path d="M30 36l17-16 18 15" fill="none" stroke="#f4dcc8" strokeWidth="2" strokeDasharray="3 2" />
    <circle cx="47" cy="27" r="3" fill="#f5d75c" /><path d="M38 35c6 4 13 4 19 0" stroke="#3f9a3d" strokeWidth="3" fill="none" />
    <path d="M36 44h8v18h-8z" fill="#7c2f12" stroke="#f2d9c2" /><path d="M50 42h10v10H50z" fill="#f6cf4c" stroke="#7c2f12" strokeWidth="2" />
    <path d="M96 6l13 22H83z" fill="#35843a" /><path d="M96 18l17 24H79z" fill="#2f7a35" /><path d="M96 34l21 27H75z" fill="#2a6e30" />
    <path d="M86 26c6 5 14 4 20-1M82 39c8 6 20 5 28-1M77 55c10 7 28 6 38-1" stroke="#dfe6f5" strokeWidth="5" fill="none" />
    <circle cx="92" cy="22" r="2.500" fill="#e14d3e" /><circle cx="101" cy="33" r="2.500" fill="#f4c430" /><circle cx="90" cy="46" r="3" fill="#e14d3e" /><circle cx="104" cy="48" r="3" fill="#f4c430" /><circle cx="97" cy="60" r="3" fill="#e14d3e" />
    <path d="M96 0l3 6 6 1-5 4 1 6-5-3-5 3 1-6-5-4 6-1z" fill="#f6c93f" />
  </svg>
);
const SearchGlyph = ({ s, c, w, flip }: { s: number; c: string; w: number; flip?: boolean }) => (
  <svg width={s} height={s} viewBox="0 0 36 36" fill="none" stroke={c} strokeWidth={w}>
    <g transform={flip ? 'translate(36 0) scale(-1 1)' : undefined}>
      <circle cx="15" cy="14" r="12" /><path d="M23 23l11 12" />
    </g>
  </svg>
);
const Win10 = () => (
  <svg width="30" height="30" viewBox="0 0 30 30" fill="#fff"><path d="M0 4l12-2v12.500H0zM13.500 1.800L30 0v14.500H13.500zM0 16h12v12.500L0 26.500zM13.500 16H30v14l-16.500-1.800z" /></svg>
);
const Win11 = () => (
  <svg width="58" height="58" viewBox="0 0 58 58">
    <defs><linearGradient id="w11" x1="0" y1="0" x2="1" y2="1"><stop offset="0" stopColor="#4fd3ff" /><stop offset="0.550" stopColor="#1689dc" /><stop offset="1" stopColor="#0071cc" /></linearGradient></defs>
    <path d="M3 0h25v28H0V3a3 3 0 0 1 3-3zM30 0h25a3 3 0 0 1 3 3v25H30zM0 30h28v28H3a3 3 0 0 1-3-3zM30 30h28v25a3 3 0 0 1-3 3H30z" fill="url(#w11)" />
  </svg>
);
const TaskViewIcon = () => (
  <svg width="28" height="28" viewBox="0 0 28 28" fill="none" stroke="#e4e8ea" strokeWidth="2">
    <path d="M1 0v5h18V0M1 28v-5h18v5M1 9h18v10H1zM25 0v6M25 13v15" /><path d="M23 7h4v5h-4z" fill="#fff" stroke="none" />
  </svg>
);
const HazeIcon = () => (
  <svg width="60" height="52" viewBox="0 0 60 52">
    <defs><linearGradient id="sun" x1="0" y1="0" x2="0" y2="1"><stop offset="0" stopColor="#ffc800" /><stop offset="1" stopColor="#ec6a00" /></linearGradient></defs>
    <circle cx="30" cy="26" r="25" fill="url(#sun)" />
    <g strokeWidth="5" strokeLinecap="round"><path d="M12 11h8M31 11h27" stroke="#fbf0b8" /><path d="M12 21h42" stroke="#f7dc94" /><path d="M3 31h28M42 31h5" stroke="#f3cf8a" /><path d="M3 42h42" stroke="#efc88e" /></g>
  </svg>
);
const DeskIcon = () => (
  <svg width="60" height="58" viewBox="0 0 60 58"><rect x="0" y="16" width="46" height="41" rx="3" fill="#2c2b2a" /><rect x="15" y="1" width="45" height="41" rx="3" fill="#f4f3f2" /><path d="M15 16h31v26H18a3 3 0 0 1-3-3z" fill="#b9b8b7" /></svg>
);
const CopilotIcon = () => (
  <svg width="60" height="58" viewBox="0 0 60 58">
    <defs>
      <linearGradient id="cpA" x1="0" y1="0" x2="0" y2="1"><stop offset="0" stopColor="#2aa6f2" /><stop offset="0.500" stopColor="#1b8fc0" /><stop offset="0.800" stopColor="#8fc63c" /><stop offset="1" stopColor="#f2c81e" /></linearGradient>
      <linearGradient id="cpB" x1="1" y1="0" x2="0.300" y2="1"><stop offset="0" stopColor="#9a4df0" /><stop offset="0.500" stopColor="#f2609a" /><stop offset="1" stopColor="#f78a3c" /></linearGradient>
    </defs>
    <path d="M15 8c2-5 4-8 9-8h13c5 0 6 4 8 9l2 8H36c-5 0-7 4-8 8l-4 16H8c-8 0-9-7-7-12z" fill="url(#cpA)" />
    <path d="M28 0h9c5 0 6 4 8 9l2 8H36z" fill="#1553cf" />
    <path d="M45 50c-2 5-4 8-9 8H26c-5 0-8-4-9-9l-1-8h8c5 0 6-4 7-8l4-16h17c8 0 9 7 7 12z" fill="url(#cpB)" />
    <path d="M28 41l7-24 8 0-8 24z" fill="#f0dfe0" />
  </svg>
);
const DocSearchIcon = () => (
  <svg width="54" height="60" viewBox="0 0 54 60">
    <path d="M8 2h33l11 14v42H8z" fill="#e6effa" stroke="#4a6fae" strokeWidth="3" /><path d="M40 2l12 15H40z" fill="#3c79c9" />
    <circle cx="27" cy="28" r="12" fill="#bfe3f7" stroke="#6b93be" strokeWidth="3.500" /><path d="M19 38L3 55" stroke="#c88b44" strokeWidth="7" />
  </svg>
);
const NightIcon = () => (
  <svg width="60" height="60" viewBox="0 0 60 60">
    <rect width="60" height="60" rx="12" fill="#fff" />
    <text x="30" y="29" fontSize="19" fontWeight="700" textAnchor="middle" textLength="54" lengthAdjust="spacingAndGlyphs" fill="#111" fontFamily="Liberation Serif, serif">NIGHT</text>
    <text x="30" y="43.500" fontSize="19" fontWeight="700" textAnchor="middle" textLength="56" lengthAdjust="spacingAndGlyphs" fill="#111" fontFamily="Liberation Serif, serif">CROWS</text>
  </svg>
);
const CrowIcon = () => (
  <svg width="60" height="60" viewBox="0 0 60 60">
    <rect width="60" height="60" rx="10" fill="#050505" /><circle cx="31" cy="25" r="22" fill="#63686b" /><circle cx="33" cy="22" r="16" fill="#a4a8aa" />
    <path d="M17 23l9-7c6-5 12-3 13 3 6 8 5 18 0 25-4 5-6 8-5 16H14l6-20c-3-7-1-13 2-17z" fill="#070707" />
    <path d="M0 46c14 4 40 4 60-2v16H0z" fill="#050505" />
  </svg>
);
const NppIcon = () => (
  <svg width="58" height="60" viewBox="0 0 58 60">
    <path d="M2 7l34 0 8 8v41L2 59z" fill="#f3f6ea" stroke="#b9c2b0" /><path d="M2 38l42-6v24L2 59z" fill="#56c22e" />
    <path d="M2 7h34" stroke="#9aa" strokeWidth="3" strokeDasharray="3 3" />
    <ellipse cx="16" cy="28" rx="12" ry="6" fill="#7fd43a" stroke="#2c6f12" strokeWidth="1.500" /><circle cx="18" cy="20" r="4" fill="#fff" stroke="#2c6f12" strokeWidth="1.500" />
    <text x="12" y="45" fontSize="12" fontStyle="italic" textLength="29" lengthAdjust="spacingAndGlyphs" fill="#234b12" fontFamily="Liberation Serif, serif">Notepad</text>
    <path d="M39 32L53 2" stroke="#f0a52c" strokeWidth="4.500" /><path d="M52 5l2-5" stroke="#b8423a" strokeWidth="4.500" />
  </svg>
);
const RdpIcon = () => (
  <svg width="58" height="58" viewBox="0 0 58 58">
    <path d="M4 2l34 6v28L4 30z" fill="#1a2fd0" stroke="#b9bfc8" strokeWidth="3" /><path d="M20 4l16 4v10z" fill="#7d8cf5" />
    <path d="M16 35l12 2v9l-14-2z" fill="#c7ccd2" /><circle cx="43" cy="42" r="14" fill="#e6e8e6" stroke="#a9adaa" />
    <path d="M36 44l7-6-5-5M50 36l-8 7 6 6" fill="none" stroke="#2fae28" strokeWidth="3.500" />
  </svg>
);
const PaintIcon = () => (
  <svg width="60" height="60" viewBox="0 0 60 60">
    <defs><linearGradient id="pt" x1="0" y1="0" x2="0.300" y2="1"><stop offset="0" stopColor="#52d6fb" /><stop offset="1" stopColor="#0c7bd6" /></linearGradient></defs>
    <path d="M35 1c15 0 21 13 21 27S48 58 32 58c-8 0-10-6-9-12s-2-8-6-6-12 8-15 1C-3 22 12 1 35 1z" fill="url(#pt)" />
    <circle cx="16" cy="19" r="6" fill="#2f9a1d" /><circle cx="30" cy="12" r="5.500" fill="#fbb70f" /><circle cx="10" cy="31" r="5.500" fill="#f25b22" /><circle cx="32" cy="34" r="4" fill="#d5eefc" />
    <path d="M38 19h13v8l-3 4h-7l-3-4z" fill="#e8c08a" /><path d="M42 30h5l-1 29h-3z" fill="#9a5a14" />
  </svg>
);

/* ---------- status marks ---------- */
const UpMark = ({ bad }: { bad?: boolean }) => (
  <svg width="22" height="22" viewBox="0 0 22 22"><circle cx="11" cy="11" r="11" fill="#7cc265" />{bad && <path d="M13 13h9v9h-9z" fill="#f0403a" />}</svg>
);
const WarnMark = () => (
  <svg width="22" height="22" viewBox="0 0 22 22"><path d="M11 1.500L21.500 22H.5z" fill="#f5ce1b" /><path d="M9.400 8h3.200v7H9.400zM9.400 16.500h3.200v3H9.400z" fill="#6b4e12" /></svg>
);
const CritMark = () => (
  <svg width="22" height="22" viewBox="0 0 22 22"><path d="M11 .5L22 21.500H0z" fill="#dc3a3c" /><path d="M9.600 8h2.800v7H9.600zM9.600 16.500h2.800v2.500H9.600z" fill="#fff" /></svg>
);
const StopMark = () => (
  <svg width="22" height="22" viewBox="0 0 22 22"><path d="M6.500 0h9L22 6.500v9L15.500 22h-9L0 15.500v-9z" fill="#dc3a3c" /></svg>
);

/* ---------- world map ---------- */
const land = [
  '585,292 655,292 665,308 704,310 704,340 690,350 690,390 678,440 668,478 655,490 620,492 595,520 595,550 577,575 562,560 550,520 548,490 535,470 535,410 515,392 475,390 475,370 500,350 515,330 525,310 575,310',
  '400,310 508,310 508,330 475,345 470,370 440,392 388,392 388,350 376,338 380,328 400,325',
  '268,365 328,365 328,390 345,392 360,420 357,450 310,452 268,448 268,425 290,412 268,392',
  '340,343 362,343 362,360 340,360',
  '365,375 385,375 385,395 402,425 398,460 365,455 358,400',
  '402,418 472,420 490,445 502,465 430,464 402,446',
  '110,455 135,435 160,435 165,453 270,453 290,442 330,450 400,460 440,480 436,535 400,530 385,550 390,575 430,602 452,612 448,560 448,500 455,480 500,463 521,485 523,560 528,600 545,620 545,645 520,658 492,685 480,715 465,740 450,772 445,792 435,800 434,842 422,838 418,820 390,815 365,825 350,850 368,868 402,870 402,905 425,935 442,950 425,958 390,935 350,905 330,862 305,835 290,800 278,770 265,700 258,650 240,610 215,580 190,555 155,562 168,580 140,592 120,580 108,560 110,500 96,482',
  '428,872 455,870 496,886 496,898 450,895 430,884',
  '445,938 475,936 495,950 520,975 555,1008 560,1045 600,1050 620,1068 618,1100 600,1130 596,1170 590,1205 560,1230 550,1260 530,1285 527,1310 505,1322 500,1360 494,1400 494,1458 475,1458 460,1430 463,1340 476,1300 478,1200 478,1150 455,1110 438,1080 438,1060 455,1010 470,980 465,950',
  '658,488 690,486 706,513 688,538 656,516',
  '728,560 740,575 747,608 752,642 706,644 706,600 728,595',
  '767,592 766,540 788,520 803,480 823,452 882,452 908,470 910,500 922,473 945,490 960,468 985,455 1010,450 1018,422 1030,422 1032,480 1040,505 1050,440 1075,402 1143,400 1143,378 1116,352 1116,328 1130,345 1150,350 1162,380 1187,383 1192,410 1222,423 1252,425 1265,443 1290,442 1275,412 1275,400 1297,402 1307,437 1332,438 1345,453 1432,455 1455,470 1477,488 1477,517 1440,532 1412,555 1382,565 1380,602 1367,645 1346,645 1345,590 1370,562 1340,562 1300,578 1282,602 1280,642 1292,700 1285,735 1265,735 1250,770 1225,756 1210,762 1222,800 1227,850 1210,882 1182,905 1165,910 1177,940 1172,980 1150,962 1152,1000 1165,1050 1148,1032 1128,980 1126,930 1112,900 1098,890 1080,920 1066,948 1062,1005 1050,985 1040,950 1030,900 1008,890 978,868 945,850 955,862 980,880 978,898 940,932 915,928 890,880 880,830 880,775 830,768 820,745 860,735 872,700 840,712 830,740 825,770 808,768 800,735 780,712 770,740 740,758 715,762 715,698 762,700 748,680 745,652 780,642 795,625 845,615 845,590 840,530 827,530 827,580 805,612 788,600',
  '1297,618 1307,618 1307,718 1297,718',
  '1300,722 1310,782 1285,812 1250,818 1252,800 1285,782',
  '715,785 740,775 800,770 812,800 850,795 880,800 885,850 900,895 920,945 946,943 940,980 912,1030 905,1070 914,1100 910,1140 887,1180 882,1230 862,1275 838,1297 816,1282 803,1240 798,1200 792,1150 793,1090 776,1060 773,1010 750,993 715,1007 688,970 678,930 680,865 700,830',
  '925,1138 945,1138 937,1190 927,1222 908,1218 913,1160',
  '1188,972 1196,1000 1222,978 1237,1020 1210,1048 1188,1032 1172,1005',
  '1145,1042 1165,1045 1185,1075 1235,1090 1235,1105 1180,1085',
  '1250,1043 1300,1058 1330,1102 1330,1112 1298,1102 1258,1070',
  '1178,1188 1215,1153 1235,1123 1282,1118 1292,1150 1303,1098 1317,1130 1332,1190 1345,1240 1337,1280 1325,1332 1297,1318 1280,1290 1258,1265 1215,1292 1188,1292 1188,1230',
  '1310,1338 1332,1338 1326,1366 1312,1360',
  '1432,1298 1443,1325 1415,1398 1395,1400 1397,1360 1420,1335',
].map((p) => p.split(' ').map((q) => q.split(',').map(Number)));
const seas = ['905,732 928,732 935,800 912,800 905,770'].map((p) => p.split(' ').map((q) => q.split(',').map(Number)));
const inside = (poly: number[][], x: number, y: number) => {
  let r = false;
  for (let i = 0, j = poly.length - 1; i < poly.length; j = i++) {
    const [xi, yi] = poly[i];
    const [xj, yj] = poly[j];
    if (yi > y !== yj > y && x < ((xj - xi) * (y - yi)) / (yj - yi) + xi) r = !r;
  }
  return r;
};
let dots = '';
let halo = '';
for (let r = 0; r < 66; r++)
  for (let c = 0; c < 118; c++) {
    const gx = 91 + c * 12.1;
    const gy = 299 + r * 18.05;
    if (land.some((p) => inside(p, gx, gy)) && !seas.some((p) => inside(p, gx, gy))) {
      const x = (gx / 1.5077 - 29.5).toFixed(1);
      const y = (gy / 2.24 - 101).toFixed(1);
      dots += `M${x} ${y}m-2.200-2.200h4.400v4.400h-4.400z`;
      halo += `M${x} ${y}m-5-5h10v10h-10z`;
    }
  }
const cities: [string, number, number, number, number, number][] = [
  ['New York', 300.5, 207.500, 108, 300, 243],
  ['London', 470.5, 172.700, 86, 474, 209],
  ['Tokyo', 829.5, 244, 68, 830, 284],
  ['Singapore', 729.5, 345.500, 119, 731, 385],
  ['Sydney', 848, 483, 83, 848, 523],
];
const WorldMap = () => (
  <svg width="985" height="577" viewBox="0 0 985 577">
    <defs>
      <radialGradient id="ball" cx="0.400" cy="0.350"><stop offset="0" stopColor="#fff" /><stop offset="0.600" stopColor="#cfcfd2" /><stop offset="1" stopColor="#9a9aa0" /></radialGradient>
      <clipPath id="stamp"><circle r="112" /></clipPath>
    </defs>
    <rect width="985" height="577" fill="#fafafb" />
    <path d={halo} fill="#fff1d3" />
    <path d={dots} fill="#ddb070" />
    <g transform="translate(186 392.500)">
      <circle r="108" fill="#fafafb" />
      <path d="M24 -106A109 109 0 0 1 96 50" fill="none" stroke="#2d3534" strokeWidth="8" />
      <path d="M96 50A109 109 0 0 1 5 109" fill="none" stroke="#a3a8a8" strokeWidth="7" />
      <path d="M90 62A109 109 0 0 1 12 108" fill="none" stroke="#e6e8e8" strokeWidth="3" strokeDasharray="8 7 14 5" />
      <path d="M5 109A109 109 0 0 1 -92 -59" fill="none" stroke="#2d3534" strokeWidth="8" />
      <path d="M-92 -59A109 109 0 0 1 -58 -92" fill="none" stroke="#b9bcbc" strokeWidth="6" strokeDasharray="12 2 5 2" />
      <g transform="rotate(-15.200)">
        <rect x="-114" y="-43" width="228" height="54" fill="#2d3534" clipPath="url(#stamp)" />
        <path d="M-95 -36h3M-70 7h6M-20 -39h4M60 6h7M88 -37h5M20 8h4M-50 -40h3M75 3h3M96 -8h4M40 -38h5" stroke="#dfe2e2" strokeWidth="2" />
        <text x="-16" y="-53" fontSize="24" textAnchor="middle" textLength="96" fill="#2d3534">solarwinds</text>
        <path d="M34 -76c8-6 14-4 22-12-1 12-3 20-13 22zM40 -66l14-6-7 13zM48 -57l4-3-1 5z" fill="#2d3534" />
        <text x="-2" y="-2" fontSize="38" fontWeight="800" textAnchor="middle" textLength="202" lengthAdjust="spacingAndGlyphs" fill="#fff">SAMPLE MAP</text>
        <text x="1" y="48" fontSize="27" fontWeight="700" textAnchor="middle" textLength="176" lengthAdjust="spacingAndGlyphs" fill="#2d3534">This map is not</text>
        <text x="0" y="79" fontSize="27" fontWeight="700" textAnchor="middle" textLength="50" lengthAdjust="spacingAndGlyphs" fill="#2d3534">live!</text>
      </g>
    </g>
    <g strokeWidth="4" fill="none">
      <path d="M317 205L456 179" stroke="#a8323c" />
      <path d="M486.700 179L817.700 242.500" stroke="#9d83c9" />
      <path d="M486.700 185L716 339" stroke="#3a9ba5" />
      <path d="M317 215.500L716 341.500" stroke="#85b83c" />
      <path d="M745.400 332.500L815.600 261" stroke="#3b4b95" />
      <path d="M832.300 260L847.500 466" stroke="#a01822" strokeWidth="3" strokeDasharray="4 4" />
    </g>
    {cities.map(([n, x, y, w, tx, ty]) => (
      <g key={n}>
        <circle cx={x} cy={y} r="11" fill="url(#ball)" stroke="#8f8f96" />
        <text x={tx} y={ty} fontSize="22.500" fontWeight="700" textAnchor="middle" textLength={w} lengthAdjust="spacingAndGlyphs" fill="#000" fontFamily="Liberation Sans, Arial, sans-serif">{n}</text>
      </g>
    ))}
  </svg>
);

/* ---------- data ---------- */
const tabs: [React.ReactNode, string][] = [
  [<OutlookFav />, 'N'], [<PinIcon c="#e83a5e" />, 'و'], [<KFav />, 'ژ'], [<TriFav />, 'ر'],
  [<TextFav bg="#fff" fg="#178aa8" t="ICT" fs={14} bd="#178aa8" w={800} tl={22} />, 'L'], [<GlobeFav />, 'D'], [<RedAFav />, 'پ'],
  [<TextFav bg="#8b8b8b" fg="#fff" t="Z" fs={26} w={800} />, 'z'], [<TextFav bg="#0a0aa0" fg="#fff" t="IP" fs={25} w={400} />, 'I'], [<BlueTilde />, 'J'],
  [<GlobeFav />, 'I'], [<DDFav />, 'D'], [<DownloadFav />, 'D'], [<DropFav />, 'د'], [<ShareFav />, 'ز'], [<VmFav />, 'V'],
  [<GlobeFav />, 'C'], [<GoogleFav />, 'ر'], [<GoogleFav />, 'آ'], [<YellowFav />, 'د'],
  [<TextFav bg="#1c9cd8" fg="#fff" t="U" fs={24} />, 'U'], [<PinIcon c="#f5259a" />, 'د'], [<PinIcon c="#f2506a" />, 'و'], [<RedTextFav />, 'د'],
  [<TreeFav />, 'ر'], [<GoogleFav />, 'k'], [<GrayFav />, 'ز'],
];
const lateTabs: [React.ReactNode, string][] = [
  [<GlobeFav />, 'I'], [<GlobeFav />, 'پ'], [<FortiFav />, 'F'], [<RedAFav />, 'پ'], [<PuzzleFav />, 'E'],
];
type Node = [number, 'open' | 'shut' | '', 'up' | 'warn' | 'bad', string];
const tree: Node[] = [
  [0, 'shut', 'up', '[Unknown]'], [0, 'shut', 'warn', 'ALB'], [0, 'shut', 'warn', 'AZE'], [0, 'open', 'up', 'AZW'],
  [1, 'open', 'up', 'Khoy'], [2, 'open', 'up', '10787'],
  [3, '', 'up', 'AZW-Khoy-10787-DVR(10.129.39.24)'], [3, '', 'up', 'AZW-Khoy-10787-PC(10.129.39.23)'],
  [3, '', 'up', 'AZW-Khoy-10787-POS-Saman(10.129.39.25)'], [3, '', 'bad', 'AZW-Khoy-10787-RTR(10.129.39.17)'],
  [3, '', 'up', 'AZW-Khoy-10787-SRV(10.129.39.22)'],
  [0, 'open', 'up', 'ESF'], [1, 'shut', 'up', 'Esfahan'], [0, 'shut', 'up', 'HQ'], [0, 'shut', 'warn', 'Qom'], [0, 'shut', 'warn', 'Tehran'],
];
const alerts: [number, string, string, string, string, string][] = [
  [98, 'Node', 'rebooted', 'Node\nrebooted', 'Solarwinds', ''],
  [94, 'Node', 'rebooted', 'Node\nrebooted', 'GTK-Mikrotik-LAN-\nEsfehan-Office', ''],
  [128, 'High', 'response\ntime', 'High\nresponse\ntime', 'GTK-Mikrotik-LAN-\nEsfehan-Office', '4m'],
  [117, 'Node', 'is down', 'Node is\ndown', 'AZE-Maragheh-\n10980-\nPC(10.129.2.119)', '11m'],
  [128, 'High', 'response\ntime', 'High\nresponse\ntime', 'AZE-Malekan-11187-\nPOS-\nSaman(10.129.3.121)', '12m'],
];
const down = [
  'ALB-Karaj-10055-POS-Mellat(10.128.160.74)', 'ALB-Karaj-10055-POS-Saman(10.128.160.73)', 'ALB-Karaj-10091-DVR(10.128.160.200)',
  'ALB-Karaj-10091-PC(10.128.160.199)', 'ALB-Karaj-10091-POS-Mellat(10.128.160.202)', 'ALB-Mohammadshahr-10123-POS-Mellat(10.128.161.122)',
  'AZE-Ajabshir-10191-POS-Mellat(10.129.0.154)', 'AZE-Bonab-10331-PC(10.129.0.215)', 'AZE-Bonab-10331-POS-Mellat(10.129.0.218)',
  'AZE-Bonab-10331-POS-Saman(10.129.0.217)', 'AZE-Bonab-10331-SRV(10.129.0.214)', 'AZE-Bonab-10672-PC(10.129.1.135)',
  'AZE-Bonab-10755-PC(10.129.1.231)', 'AZE-Bonab-10755-POS-Mellat(10.129.1.234)', 'AZE-Bonab-10963-PC(10.129.1.151)',
  'AZE-Bostanabad-11294-DVR(10.129.3.216)', 'AZE-Bostanabad-11294-PC(10.129.3.215)', 'AZE-Bostanabad-11294-POS-Mellat(10.129.3.218)',
  'AZE-Bostanabad-11294-POS-Saman(10.129.3.217)', 'AZE-Bostanabad-11294-RTR(10.129.3.209)', 'AZE-Bostanabad-11294-SRV(10.129.3.214)',
  'AZE-Hashtroud-10754-PC(10.129.1.247)', 'AZE-Malekan-11273-PC(10.129.3.199)', 'AZE-Maragheh-10980-PC(10.129.2.119)',
  'AZE-Miyaneh-11388-PC(10.129.3.231)', 'AZE-Tabriz-10168-PC(10.129.0.7)', 'AZE-Tabriz-11207-POS-Mellat(10.129.3.170)', 'AZE-Tabriz-11226-PC(10.129.3.183)',
];
const legend = [
  ['#937ff0', '0 - 10%'], ['#3d49b0', '10 - 25%'], ['#2fa3ad', '25 - 40%'], ['#76b82a', '40 - 55%'],
  ['#f7dc27', '55 - 70%'], ['#f59a2e', '70 - 85%'], ['#dc1a3a', '85 - 100%'], ['#b2b2b2', 'Unknown'],
];

export default function App() {
  return (
    <Screen>
      <Global />
      <TopStrip>
        <OrangeDot />
        <GripBox><GripCell $w={37} /><GripCell $w={71} /></GripBox>
      </TopStrip>
      <Remote>
        <Gutter />
        <Desktop>
          <TabStrip>
            <TabMenu><svg width="16" height="12" viewBox="0 0 16 12"><path d="M2 2l6 7 6-7" fill="none" stroke="#222" strokeWidth="3" /></svg></TabMenu>
            {tabs.map(([icon, t], i) => (
              <Tab key={i} $w={i < 9 ? 92.4 : 90.8} $sep={i > 0}>{icon}<TabLetter>{t}</TabLetter></Tab>
            ))}
            <ActiveTab>
              <ActiveShape width="110" height="72" viewBox="0 0 110 72"><path d="M0 72c10-3 15-9 15-18V29c0-12 6-18 18-18h44c12 0 18 6 18 18v25c0 9 5 15 15 18z" fill="#fff" /></ActiveShape>
              <ActiveLetter>(</ActiveLetter>
              <CloseMark width="14" height="14" viewBox="0 0 14 14"><path d="M1 1l12 12M13 1L1 13" stroke="#333" strokeWidth="2.800" /></CloseMark>
            </ActiveTab>
            {lateTabs.map(([icon, t], i) => (
              <Tab key={i} $w={90.5} $sep={i > 0}>{icon}<TabLetter>{t}</TabLetter></Tab>
            ))}
          </TabStrip>
          <Toolbar>
            <ToolIcon $gap={41}><svg width="24" height="22" viewBox="0 0 24 22"><path d="M11 1L2 11l9 10M2 11h22" fill="none" stroke="#555" strokeWidth="3" /></svg></ToolIcon>
            <ToolIcon $gap={41}><svg width="24" height="22" viewBox="0 0 24 22"><path d="M13 1l9 10-9 10M22 11H0" fill="none" stroke="#b3b3b3" strokeWidth="3" /></svg></ToolIcon>
            <ToolIcon $gap={39}><svg width="24" height="24" viewBox="0 0 24 24"><path d="M20 6a10 10 0 1 0 2 8" fill="none" stroke="#4a4a4a" strokeWidth="3" /><path d="M22 0v9h-9z" fill="#4a4a4a" /></svg></ToolIcon>
            <Omnibox>
              <SecurityChip>
                <svg width="25" height="22" viewBox="0 0 25 22"><path d="M12.500 2L23.500 20.500h-22z" fill="none" stroke="#333" strokeWidth="2.400" /><path d="M12.500 8v7M12.500 16v2.500" stroke="#333" strokeWidth="2.400" /></svg>
                Not secure
              </SecurityChip>
              <Url>10.131.3.30/Orion/SummaryView.aspx</Url>
            </Omnibox>
          </Toolbar>
          <Nav>
            <Logo>
              <LogoText>solarwinds</LogoText>
              <LogoFlame width="43" height="42" viewBox="0 0 43 42">
                <path d="M0 14C8 3 22 10 42 0c-2 12-8 17-17 18C17 19 9 20 0 14z" fill="#f9a01f" />
                <path d="M14 22c9 0 16 0 24-5-3 9-9 11-19 11zM21 30c6 0 9 0 14-4-2 7-5 8-10 9zM26 37l6-3-4 8z" fill="#f9a01f" />
              </LogoFlame>
            </Logo>
            <NavItem $w={265}>MY DASHBOARDS<Caret /></NavItem>
            <NavItem $w={275}>ALERTS &amp; ACTIVITY<Caret /></NavItem>
            <NavItem $w={179}>REPORTS<Caret /></NavItem>
            <NavItem $w={140}>SETTINGS<Caret /></NavItem>
            <NavRight>
              <NavCell $w={127} $pad={34} $gap={28}>
                <svg width="26" height="30" viewBox="0 0 26 30"><path d="M13 0c2 0 2 3 2 4 5 2 6 6 6 11 0 4 2 6 5 9H0c3-3 5-5 5-9 0-5 1-9 6-11 0-1 0-4 2-4zM9 26h8c0 5-8 5-8 0z" fill="#fff" /></svg>
                <Caret />
              </NavCell>
              <NavCell $w={140} $pad={32} $gap={18}>
                <svg width="26" height="32" viewBox="0 0 26 32"><circle cx="13" cy="8" r="7.500" fill="#fff" /><path d="M4 15c5 5 13 5 18 0 6 6 5 16-4 16H8c-9 0-10-10-4-16z" fill="#fff" /></svg>
                ADMIN
              </NavCell>
            </NavRight>
          </Nav>
          <Page>
            <SideBar>
              <EditSlot>
                <svg width="36" height="34" viewBox="0 0 36 34" fill="none" stroke="#3f7f7c" strokeWidth="2"><path d="M4 22L23 4c4-4 12 2 8 7L12 29l-9 3zM20 7l8 7M4 22c4 0 8 3 8 7" /></svg>
              </EditSlot>
            </SideBar>
            <Content>
              <TitleRow><PageTitle>Orion Summary Home</PageTitle><Clock>W</Clock></TitleRow>
              <Columns>
                <Column $w={765}>
                  <Panel $h={776}>
                    <PanelHead $h={98} $pad={19}>
                      <div><PanelTitle>All Nodes</PanelTitle><PanelSub>GROUPED BY VENDOR, STATUS</PanelSub></div>
                      <PanelLinks><span>MANAGE NODES</span><span>EDIT</span><span>HELP</span></PanelLinks>
                    </PanelHead>
                    <Tree>
                      {tree.map(([d, o, s, t], i) => (
                        <TreeRow key={i} $depth={d}>
                          <Twist>{o === 'open' ? <DownTwist /> : o === 'shut' ? <RightTwist /> : null}</Twist>
                          <StatusSlot>{s === 'warn' ? <WarnMark /> : <UpMark bad={s === 'bad'} />}</StatusSlot>
                          <TreeText>{t}</TreeText>
                        </TreeRow>
                      ))}
                    </Tree>
                  </Panel>
                  <Panel $h={780}>
                    <PanelHead $h={98} $pad={19}>
                      <div><PanelTitle>All Active Alerts (115)</PanelTitle><PanelSub>ALL UNACKNOWLEDGED ALERTS</PanelSub></div>
                      <PanelLinks><span>EDIT</span><span>HELP</span></PanelLinks>
                    </PanelHead>
                    <AlertTable>
                      <AlertHead>
                        <span>ALERT<br />NAME</span><span>MESSAGE</span><span>TRIGGERING OBJECT</span><span>ACTIVE<br />TIME</span><span>RELATED NODE</span>
                      </AlertHead>
                      {alerts.map(([h, a, b, m, o, t], i) => (
                        <AlertRow key={i} $h={h} $odd={i % 2 === 1}>
                          <NameCell><NameFirst><CritMark />{a}</NameFirst>{b}</NameCell>
                          <Cell $red>{m}</Cell><Cell>{o}</Cell><Cell $red>{t}</Cell><Cell>{o}</Cell>
                        </AlertRow>
                      ))}
                    </AlertTable>
                  </Panel>
                </Column>
                <Column $w={726}>
                  <Panel $h={1600}>
                    <PanelHead $h={73} $pad={19}>
                      <PanelTitle>Down Nodes</PanelTitle>
                      <PanelLinks><span>EDIT</span><span>HELP</span></PanelLinks>
                    </PanelHead>
                    <DownList>
                      {down.map((t) => <DownRow key={t}><DownMark><StopMark /></DownMark>{t}</DownRow>)}
                    </DownList>
                  </Panel>
                </Column>
                <Column $w={1500}>
                  <Panel $h={959}>
                    <PanelHead $h={73} $pad={18}><PanelTitle>Map</PanelTitle></PanelHead>
                    <MapBody>
                      <WorldMap />
                      <LegendTitle>Link Utilization:</LegendTitle>
                      <LegendRow>{legend.map(([c, t]) => <LegendItem key={t}><Swatch $c={c} />{t}</LegendItem>)}</LegendRow>
                      <LegendRow><LegendItem><DownSwatch />Down status</LegendItem></LegendRow>
                      <HelpLink>Not seeing expected result?</HelpLink>
                      <Hints>
                        <Hint>Visualize your environment with customized maps.</Hint>
                        <Hint><span>To create or edit your own map go to <b>Start &gt; All Programs &gt; SolarWinds &gt; Network Atlas</b> on your SolarWinds site or » <HintLink>Download Network Atlas</HintLink></span></Hint>
                      </Hints>
                    </MapBody>
                  </Panel>
                </Column>
              </Columns>
            </Content>
            <NavShadow />
          </Page>
          <HScroll><HThumb /></HScroll>
          <InnerBar>
            <StartCell><Win10 /></StartCell>
            <InnerSearch>
              <SearchGlyph s={30} c="#333" w={2.600} flip />
              Type here to search
              <InnerArt><FestiveArt wide /></InnerArt>
            </InnerSearch>
            <TaskView><TaskViewIcon /></TaskView>
            <InnerItem><EdgeIcon /></InnerItem>
            <InnerItem><LegacyFolder /></InnerItem>
            <InnerItem $open $active><ChromeIcon s={43} /></InnerItem>
            <InnerItem $open><BallIcon /></InnerItem>
            <InnerItem $open><TermIcon /></InnerItem>
            <InnerItem $open><SnipIcon /></InnerItem>
            <InnerItem $open><StickyIcon /></InnerItem>
            <InnerItem><AnyDeskIcon s={44} /></InnerItem>
            <InnerItem $open><SwirlIcon s={44} frame /></InnerItem>
            <InnerItem $open><OfficeIcon t="O" dark="#0a62b5" mid="#1784d8" light="#35b4ec" mail /></InnerItem>
            <InnerItem $open><SkypeIcon /></InnerItem>
            <InnerItem $open><OfficeIcon t="X" dark="#107c41" mid="#1f9d60" light="#33c481" /></InnerItem>
            <InnerItem $open><LegacyPaint /></InnerItem>
            <InnerItem $open><RarIcon /></InnerItem>
            <InnerItem $open><NotepadIcon /></InnerItem>
            <InnerItem $open><CmdIcon /></InnerItem>
            <InnerItem $open><VisioIcon /></InnerItem>
          </InnerBar>
          <StatusPopup>10.131.3.30/Orion/NetPerfMon/NodeDetails.aspx?NetObject=N:323</StatusPopup>
          <Tooltip>
            <TooltipHead>AZW-Khoy-10787-DVR(1<br />0.129.39.24)</TooltipHead>
            <TooltipBody>
              <TipRow $h={40}>Node is Up.</TipRow>
              <TipRow $h={41}><TipLabel>Polling IP Address:</TipLabel>10.129.39.24</TipRow>
              <TipRow $h={42}>
                <TipLabel>Machine Type:</TipLabel>
                <TipValue>
                  <svg width="22" height="27" viewBox="0 0 22 27"><defs><linearGradient id="srv" x1="0" x2="1"><stop offset="0" stopColor="#e8e8e8" /><stop offset="1" stopColor="#8e8e8e" /></linearGradient></defs><rect x="1" y="1" width="20" height="25" fill="url(#srv)" stroke="#666" strokeWidth="1.500" /><path d="M4 6h13M4 10h13" stroke="#666" strokeWidth="1.500" /></svg>
                  <MachineName>Unknown</MachineName>
                </TipValue>
              </TipRow>
              <TipRow $h={41}><TipLabel>Avg Resp Time:</TipLabel><TipValue $w={63}>81 ms</TipValue><Meter><MeterFill style={{ width: `${(81 / 3000) * 100}%` }} /></Meter></TipRow>
              <TipRow $h={35}><TipLabel>Packet Loss:</TipLabel><TipValue $w={63}>0 %</TipValue><Meter /></TipRow>
            </TooltipBody>
            <TooltipArrow width="42" height="40" viewBox="0 0 42 40"><path d="M41 1H1L41 39z" fill="#fff" /><path d="M41 1H1L41 39" fill="none" stroke="#8f8f8f" strokeWidth="1.500" /></TooltipArrow>
          </Tooltip>
        </Desktop>
      </Remote>
      <OuterBar>
        <Weather><HazeIcon /><div>10°C<Muted>Haze</Muted></div></Weather>
        <Win11 />
        <SearchPill><SearchGlyph s={37} c="#222" w={3.600} />Search<PillArt><FestiveArt /></PillArt></SearchPill>
        <OuterItem><DeskIcon /></OuterItem>
        <OuterItem><CopilotIcon /></OuterItem>
        <OuterItem $mark="dot"><FolderIcon s={60} /></OuterItem>
        <OuterItem $mark="dot"><DocSearchIcon /></OuterItem>
        <OuterItem $mark="dot"><NightIcon /></OuterItem>
        <OuterItem $mark="dot"><CrowIcon /></OuterItem>
        <OuterItem $mark="dot"><NppIcon /></OuterItem>
        <OuterItem $mark="dot"><RdpIcon /></OuterItem>
        <OuterItem $mark="dot"><ChromeIcon s={60} /></OuterItem>
        <OuterItem $mark="active"><SwirlIcon s={60} /></OuterItem>
        <OuterItem $mark="dot"><AnyDeskIcon s={60} /></OuterItem>
        <OuterItem $mark="dot"><PaintIcon /></OuterItem>
        <Tray>
          <svg width="28" height="17" viewBox="0 0 28 17"><path d="M2 15L14 3l12 12" fill="none" stroke="#1b1b1b" strokeWidth="3" /></svg>
          <svg width="41" height="28" viewBox="0 0 41 28"><path d="M10 26a8.500 8.500 0 0 1 0-17C13 0 28-1 31 10c11 0 12 16 1 16z" fill="#e3e2e1" stroke="#1b1b1b" strokeWidth="3" /><path d="M12 10c7 0 10 5 17 9l-8 6" fill="#a9a7a6" /></svg>
        </Tray>
      </OuterBar>
    </Screen>
  );
}
